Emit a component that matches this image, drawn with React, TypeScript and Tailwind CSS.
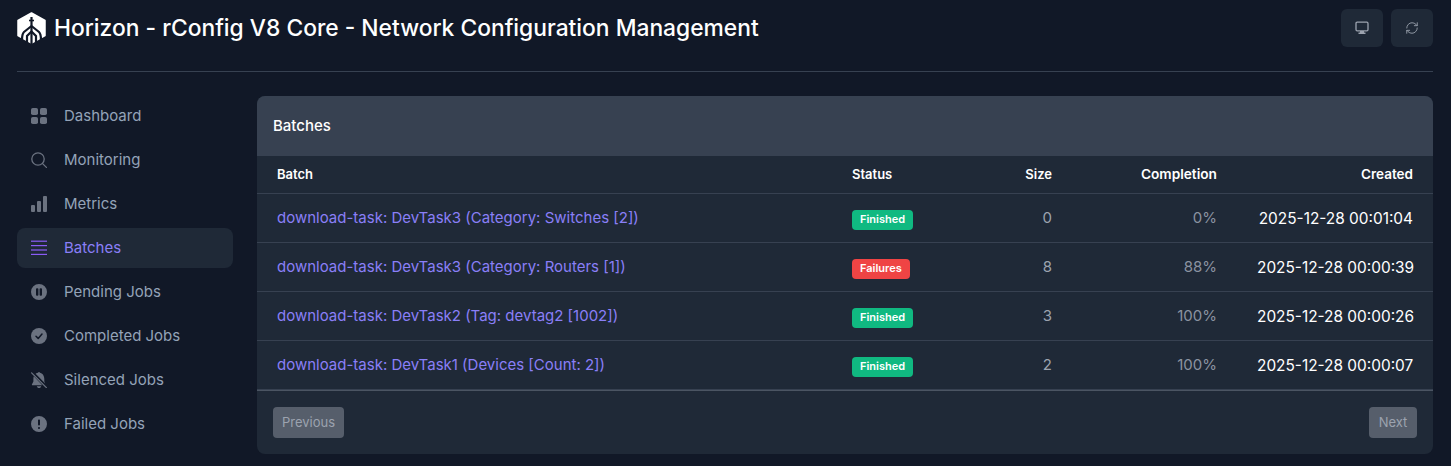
import { RefreshCw } from 'lucide-react';
import type { ReactNode } from 'react';

const iconProps = { width: 16, height: 16, viewBox: '0 0 16 16', fill: 'currentColor' };

const NAV: { name: string; icon: ReactNode; active?: boolean }[] = [
    {
        name: 'Dashboard',
        icon: (
            <svg {...iconProps}>
                <rect x="0" y="0" width="7" height="7" rx="1.8" />
                <rect x="9" y="0" width="7" height="7" rx="1.8" />
                <rect x="0" y="9" width="7" height="7" rx="1.8" />
                <rect x="9" y="9" width="7" height="7" rx="1.8" />
            </svg>
        ),
    },
    {
        name: 'Monitoring',
        icon: (
            <svg {...iconProps} fill="none" stroke="currentColor" strokeWidth="1.3" strokeLinecap="round">
                <circle cx="7" cy="7" r="6.2" />
                <path d="M11.6 11.6L15.4 15.4" />
            </svg>
        ),
    },
    {
        name: 'Metrics',
        icon: (
            <svg {...iconProps}>
                <rect x="0" y="9" width="4" height="7" rx="1" />
                <rect x="6" y="5" width="4" height="11" rx="1" />
                <rect x="12" y="0" width="4" height="16" rx="1" />
            </svg>
        ),
    },
    {
        name: 'Batches',
        active: true,
        icon: (
            <svg {...iconProps}>
                <rect x="0" y="0.6" width="16" height="1.2" />
                <rect x="0" y="5" width="16" height="1.2" />
                <rect x="0" y="9.4" width="16" height="1.2" />
                <rect x="0" y="13.8" width="16" height="1.2" />
            </svg>
        ),
    },
    {
        name: 'Pending Jobs',
        icon: (
            <svg {...iconProps}>
                <path
                    fillRule="evenodd"
                    d="M8 0a8 8 0 1 0 0 16A8 8 0 0 0 8 0ZM5 5.2a.9.9 0 0 1 .9-.9h.6a.9.9 0 0 1 .9.9v5.6a.9.9 0 0 1-.9.9h-.6a.9.9 0 0 1-.9-.9V5.2Zm3.6 0a.9.9 0 0 1 .9-.9h.6a.9.9 0 0 1 .9.9v5.6a.9.9 0 0 1-.9.9h-.6a.9.9 0 0 1-.9-.9V5.2Z"
                />
            </svg>
        ),
    },
    {
        name: 'Completed Jobs',
        icon: (
            <svg {...iconProps}>
                <circle cx="8" cy="8" r="8" />
                <path d="M5 8.2l2.2 2.2L11 6" fill="none" stroke="#111827" strokeWidth="1.5" strokeLinecap="round" strokeLinejoin="round" />
            </svg>
        ),
    },
    {
        name: 'Silenced Jobs',
        icon: (
            <svg {...iconProps}>
                <path d="M2.8 4.200C2.500 5 2.400 5.900 2.400 7v2.400L1 12.200c-.3.5 0 1 .6 1h9.700L2.800 4.200Z" />
                <path d="M14.200 11.400 4.600 1.800C5.400 1.200 6.300.8 7.200.7V.5c0-.7 1.600-.7 1.600 0v.2c2.700.4 4.500 3 4.500 6.200v2.500l.9 2Z" />
                <path d="M5.800 14.200c.2 1 1.100 1.800 2.200 1.800s2-.8 2.200-1.800H5.800Z" />
                <path d="M.6.800 15.400 15.600" fill="none" stroke="currentColor" strokeWidth="1.200" strokeLinecap="round" />
            </svg>
        ),
    },
    {
        name: 'Failed Jobs',
        icon: (
            <svg {...iconProps}>
                <path
                    fillRule="evenodd"
                    d="M8 0a8 8 0 1 0 0 16A8 8 0 0 0 8 0Zm0 3.4c.6 0 1 .4 1 1v4.2a1 1 0 0 1-2 0V4.400c0-.6.4-1 1-1Zm0 7.600a1.050 1.050 0 1 1 0 2.100A1.050 1.050 0 0 1 8 11Z"
                />
            </svg>
        ),
    },
];

const BATCHES = [
    { name: 'download-task: DevTask3 (Category: Switches [2])', status: 'Finished', size: 0, completion: '0%', created: '2025-12-28 00:01:04' },
    { name: 'download-task: DevTask3 (Category: Routers [1])', status: 'Failures', size: 8, completion: '88%', created: '2025-12-28 00:00:39' },
    { name: 'download-task: DevTask2 (Tag: devtag2 [1002])', status: 'Finished', size: 3, completion: '100%', created: '2025-12-28 00:00:26' },
    { name: 'download-task: DevTask1 (Devices [Count: 2])', status: 'Finished', size: 2, completion: '100%', created: '2025-12-28 00:00:07' },
];

function Logo() {
    return (
        <svg width="29" height="32" viewBox="0 0 29 32">
            <path d="M14.500 1L28 8.500V23.500L14.500 31L1 23.500V8.500Z" fill="white" stroke="white" strokeWidth="1.500" strokeLinejoin="round" />
            <g fill="none" stroke="#111827" strokeWidth="2.200">
                <path d="M14.500 5V32" />
                <path d="M14.500 14L7 20C5.500 21.500 5 23 5 28" />
                <path d="M14.500 14L22 20C23.500 21.500 24 23 24 28" />
                <path d="M14.500 19.500L10 24V32" />
                <path d="M14.500 19.500L19 24V32" />
            </g>
            <path d="M12 8.500H17" stroke="#111827" strokeWidth="1.600" />
        </svg>
    );
}

export default function App() {
    return (
        <div className="h-[466px] overflow-hidden bg-[#111827] pl-[17px] pr-[18px] font-['Inter',sans-serif]">
            {/* Header */}
            <header className="flex h-[72px] items-start justify-between border-b border-[#374151] pt-[9px]">
                <div className="flex h-[36px] items-center gap-2 pt-[2px]">
                    <Logo />
                    <h1 className="text-[22.8px] font-medium leading-none text-white">
                        Horizon - rConfig V8 Core - Network Configuration Management
                    </h1>
                </div>
                <div className="flex gap-2">
                    <button className="flex h-[38px] w-[42px] items-center justify-center rounded-md bg-[#1f2937] text-[#9ca3af]">
                        <svg width="14" height="14" viewBox="0 0 14 14" fill="none">
                            <rect x="1" y="1.200" width="12" height="8.600" rx="1.200" stroke="currentColor" strokeWidth="1.300" />
                            <path d="M5 10h4v1.500h1.500V13h-7v-1.500H5Z" fill="currentColor" />
                        </svg>
                    </button>
                    <button className="flex h-[38px] w-[42px] items-center justify-center rounded-md bg-[#1f2937] text-[#9ca3af]">
                        <RefreshCw size={14} strokeWidth={1.5} />
                    </button>
                </div>
            </header>

            <div className="flex gap-6 pt-[24px]">
                {/* Sidebar */}
                <nav className="flex w-[216px] shrink-0 flex-col gap-1">
                    {NAV.map((item) => (
                        <a
                            key={item.name}
                            className={
                                item.active
                                    ? 'flex h-10 items-center gap-[17px] rounded-lg bg-[#1f2937] px-[14px] text-[15px] text-[#8a7ff7]'
                                    : 'flex h-10 items-center gap-[17px] rounded-lg px-[14px] text-[15px] text-[#94a3b8]'
                            }
                        >
                            <span className={item.active ? 'text-[#8b5cf6]' : 'text-[#6b7280]'}>{item.icon}</span>
                            {item.name}
                        </a>
                    ))}
                </nav>

                {/* Batches panel */}
                <main className="h-[358px] min-w-0 flex-1 overflow-hidden rounded-lg bg-[#1f2937]">
                    <div className="flex h-[60px] items-center bg-[#374151] px-4 text-[15px] font-medium text-white">Batches</div>
                    <table className="w-full table-fixed border-collapse">
                        <colgroup>
                            <col className="w-[575px]" />
                            <col className="w-[160px]" />
                            <col className="w-[80px]" />
                            <col className="w-[165px]" />
                            <col className="w-[196px]" />
                        </colgroup>
                        <thead>
                            <tr className="h-[37px] border-b border-[#374151] text-[13px] font-semibold text-white">
                                <th className="px-5 text-left font-semibold">Batch</th>
                                <th className="px-5 text-left font-semibold">Status</th>
                                <th className="px-5 text-right font-semibold">Size</th>
                                <th className="px-5 text-right text-[13.7px] font-semibold">Completion</th>
                                <th className="px-5 text-right text-[13.5px] font-semibold">Created</th>
                            </tr>
                        </thead>
                        <tbody>
                            {BATCHES.map((batch) => (
                                <tr key={batch.created} className="h-[49px] border-b border-[#374151] text-[15px]">
                                    <td className="px-5 pt-[2px] text-[#8a7ff7]">{batch.name}</td>
                                    <td className="px-5 pt-[2px]">
                                        <span
                                            className={
                                                batch.status === 'Finished'
                                                    ? 'inline-flex h-5 items-center rounded bg-[#10b981] px-2 text-[11px] font-semibold text-white'
                                                    : 'inline-flex h-5 items-center rounded bg-[#ef4444] px-2 text-[11px] font-semibold text-white'
                                            }
                                        >
                                            {batch.status}
                                        </span>
                                    </td>
                                    <td className="px-5 pt-[2px] text-right text-[#9ca3af]">{batch.size}</td>
                                    <td className="px-5 pt-[2px] text-right text-[#8b93a1]">{batch.completion}</td>
                                    <td className="whitespace-nowrap px-5 pt-[2px] text-right text-[15.4px] text-white">{batch.created}</td>
                                </tr>
                            ))}
                        </tbody>
                    </table>
                    <div className="flex items-center justify-between border-t border-[#4b5563] px-4 pt-4">
                        <button className="flex h-[31px] items-center rounded bg-[#565e6b] px-[9px] pt-[2px] text-[13px] text-[#9ca3af]">Previous</button>
                        <button className="flex h-[31px] w-[48px] items-center justify-center rounded bg-[#565e6b] pt-[2px] text-[13px] text-[#9ca3af]">Next</button>
                    </div>
                </main>
            </div>
        </div>
    );
}
